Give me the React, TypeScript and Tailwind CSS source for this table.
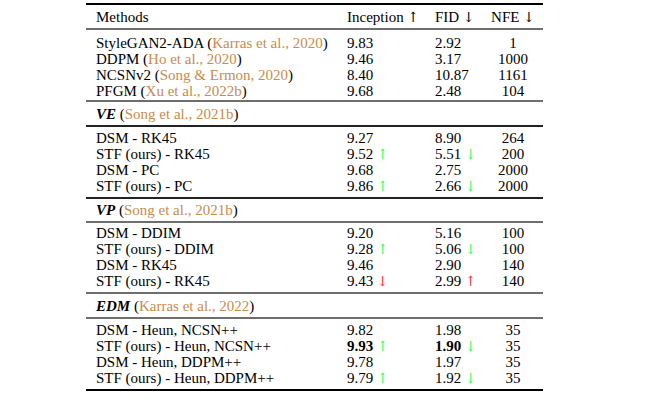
const Arrow = ({ dir, color }: { dir: 'up' | 'down'; color?: string }) => (
  <span className={`${color ?? 'text-black'} font-['DejaVu_Serif',serif] text-[14px]`}>{dir === 'up' ? '↑' : '↓'}</span>
)

const Up = ({ red }: { red?: boolean }) => (
  <> <Arrow dir="up" color={red ? 'text-[#ff3344]' : 'text-[#33ff66]'} /></>
)
const Down = ({ red }: { red?: boolean }) => (
  <> <Arrow dir="down" color={red ? 'text-[#ff3344]' : 'text-[#33ff66]'} /></>
)

const Cite = ({ children }: { children: React.ReactNode }) => (
  <span>
    {' ('}
    <span className="text-[#c98b4b]">{children}</span>
    {')'}
  </span>
)

type Row = { m: React.ReactNode; inc: React.ReactNode; fid: React.ReactNode; nfe: string }

const Rows = ({ rows, pt, pb }: { rows: Row[]; pt: string; pb: string }) => (
  <div className={`${pt} ${pb}`}>
    {rows.map((r, i) => (
      <div key={i} className="grid grid-cols-[261px_88px_48px_60px] h-[16px] items-center">
        <div className="pl-[10px] whitespace-nowrap">{r.m}</div>
        <div className="whitespace-nowrap">{r.inc}</div>
        <div className="whitespace-nowrap">{r.fid}</div>
        <div className="text-center">{r.nfe}</div>
      </div>
    ))}
  </div>
)

const Group = ({ name, cite, h }: { name: string; cite: string; h: string }) => (
  <div className={`${h} flex items-center pl-[10px]`}>
    <div className="whitespace-nowrap">
      <span className="font-bold italic">{name}</span>
      <Cite>{cite}</Cite>
    </div>
  </div>
)

const Mid = () => <div className="h-[2px] bg-[#6e6e6e]" />

export default function App() {
  return (
    <div className="w-[649px] h-[405px] bg-white pt-[3px] text-black text-[15px] leading-[16px] font-['Liberation_Serif',serif]">
      <div className="ml-[86px] w-[457px]">
        <div className="h-[2px] bg-black" />
        <div className="grid grid-cols-[261px_88px_48px_60px] h-[23px] items-center">
          <div className="pl-[10px]">Methods</div>
          <div className="whitespace-nowrap">Inception <Arrow dir="up" /></div>
          <div className="whitespace-nowrap">FID <Arrow dir="down" /></div>
          <div className="text-center whitespace-nowrap">NFE <Arrow dir="down" /></div>
        </div>
        <Mid />
        <Rows
          pt="pt-[5px]"
          pb="pb-[1px]"
          rows={[
            { m: <>StyleGAN2-ADA<Cite>Karras et al., 2020</Cite></>, inc: '9.83', fid: '2.92', nfe: '1' },
            { m: <>DDPM<Cite>Ho et al., 2020</Cite></>, inc: '9.46', fid: '3.17', nfe: '1000' },
            { m: <>NCSNv2<Cite>Song &amp; Ermon, 2020</Cite></>, inc: '8.40', fid: '10.87', nfe: '1161' },
            { m: <>PFGM<Cite>Xu et al., 2022b</Cite></>, inc: '9.68', fid: '2.48', nfe: '104' },
          ]}
        />
        <Mid />
        <Group name="VE" cite="Song et al., 2021b" h="h-[23px]" />
        <div className="h-[2px] bg-[#222]" />
        <Rows
          pt="pt-[3px]"
          pb="pb-[3px]"
          rows={[
            { m: 'DSM - RK45', inc: '9.27', fid: '8.90', nfe: '264' },
            { m: 'STF (ours) - RK45', inc: <>9.52<Up /></>, fid: <>5.51<Down /></>, nfe: '200' },
            { m: 'DSM - PC', inc: '9.68', fid: '2.75', nfe: '2000' },
            { m: 'STF (ours) - PC', inc: <>9.86<Up /></>, fid: <>2.66<Down /></>, nfe: '2000' },
          ]}
        />
        <div className="h-[2px] bg-[#222]" />
        <Group name="VP" cite="Song et al., 2021b" h="h-[22px]" />
        <Mid />
        <Rows
          pt="pt-[2px]"
          pb="pb-[3px]"
          rows={[
            { m: 'DSM - DDIM', inc: '9.20', fid: '5.16', nfe: '100' },
            { m: 'STF (ours) - DDIM', inc: <>9.28<Up /></>, fid: <>5.06<Down /></>, nfe: '100' },
            { m: 'DSM - RK45', inc: '9.46', fid: '2.90', nfe: '140' },
            { m: 'STF (ours) - RK45', inc: <>9.43<Down red /></>, fid: <>2.99<Up red /></>, nfe: '140' },
          ]}
        />
        <Mid />
        <Group name="EDM" cite="Karras et al., 2022" h="h-[23px]" />
        <Mid />
        <Rows
          pt="pt-[3px]"
          pb="pb-[3px]"
          rows={[
            { m: 'DSM - Heun, NCSN++', inc: '9.82', fid: '1.98', nfe: '35' },
            { m: 'STF (ours) - Heun, NCSN++', inc: <><b>9.93</b><Up /></>, fid: <><b>1.90</b><Down /></>, nfe: '35' },
            { m: 'DSM - Heun, DDPM++', inc: '9.78', fid: '1.97', nfe: '35' },
            { m: 'STF (ours) - Heun, DDPM++', inc: <>9.79<Up /></>, fid: <>1.92<Down /></>, nfe: '35' },
          ]}
        />
        <div className="h-[2px] bg-black" />
      </div>
    </div>
  )
}
